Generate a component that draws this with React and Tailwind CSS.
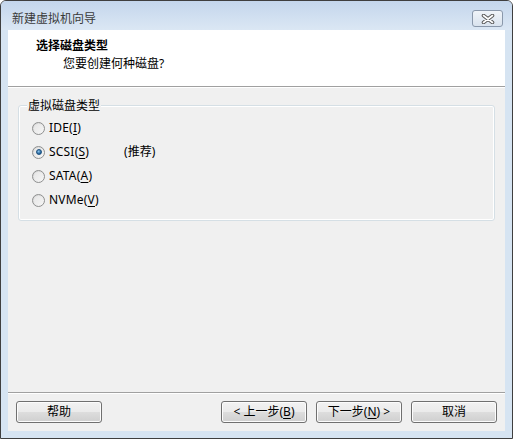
import React from "react";

const F = { fontFamily: '"Noto Sans", "Noto Sans CJK SC", sans-serif' };

function Radio({ checked }) {
  return (
    <div className="w-[13px] h-[13px] rounded-full border border-[#8e8f8f] bg-gradient-to-br from-[#d4d4d4] to-[#fbfbfb] flex items-center justify-center shrink-0">
      <div className="w-[9px] h-[9px] rounded-full bg-gradient-to-br from-[#e6e6e6] to-[#f4f4f4] flex items-center justify-center">
        {checked && (
          <div className="w-[6px] h-[6px] rounded-full bg-[radial-gradient(circle_at_40%_35%,#8cc6f0,#1f5f96_70%)] border border-[#1b4f7e]" />
        )}
      </div>
    </div>
  );
}

function RadioRow({ checked, label, ul, extra }) {
  const [a] = label;
  return (
    <div className="flex items-center h-[24px]">
      <Radio checked={checked} />
      <span className="ml-[4px] text-[12px] text-black leading-none tracking-[0.2px]">
        {a}(<span className="underline underline-offset-[2px]">{ul}</span>)
      </span>
      {extra && <span className="ml-[35px] text-[12px] text-black leading-none">{extra}</span>}
    </div>
  );
}

function Btn({ children }) {
  return (
    <div className="w-[86px] h-[22px] rounded-[3px] border border-[#707070] bg-[linear-gradient(#f2f2f2_0%,#ebebeb_48%,#dddddd_52%,#cfcfcf_100%)] flex items-center justify-center text-[12px] text-black leading-none shadow-[inset_0_0_0_1px_#fcfcfc]">
      {children}
    </div>
  );
}

export default function App() {
  return (
    <div style={F} className="w-[513px] h-[439px] border border-[#3f3f3f] rounded-t-[6px] bg-[#d6e4f2] flex flex-col px-[7px] pb-[7px] overflow-hidden">
      <div className="h-[29px] -mx-[7px] px-[7px] bg-[linear-gradient(#c4d6ec,#dbe7f4)] flex items-start justify-between">
        <span className="ml-[4px] mt-[11px] text-[12px] text-[#3a3a3a] leading-[14px]">新建虚拟机向导</span>
        <div className="w-[31px] h-[17px] mt-[9px] mr-[2px] rounded-[3px] border border-[#8a98ab] bg-[linear-gradient(#f0f4f9,#d9e3ee)] flex items-center justify-center">
          <svg width="14" height="10" viewBox="0 0 14 10">
            <path d="M2.5 1.5 L11.5 8.5 M11.5 1.5 L2.5 8.5" stroke="#5a5a5a" strokeWidth="3.6" strokeLinecap="round" />
            <path d="M2.5 1.5 L11.5 8.5 M11.5 1.5 L2.5 8.5" stroke="#ffffff" strokeWidth="1.6" strokeLinecap="round" />
          </svg>
        </div>
      </div>
      <div className="flex-1 bg-[#f0f0f0] flex flex-col">
        <div className="h-[56px] bg-white flex flex-col">
          <div className="pl-[28px] pt-[9px] text-[12px] font-bold text-black leading-[14px]">选择磁盘类型</div>
          <div className="pl-[55px] pt-[4px] text-[12px] text-black leading-[14px]">您要创建何种磁盘?</div>
        </div>
        <div className="h-px bg-[#a0a0a0]" />
        <div className="h-px bg-white" />
        <div className="flex-1 flex flex-col">
          <div className="mx-[10px] mt-[17px] h-[116px] relative rounded-[3px] border border-[#d5dfe5] shadow-[inset_0_0_0_1px_#ffffff] pt-[10px] pl-[13px]">
            <span className="absolute left-[8px] -top-[7px] px-[1px] bg-[#f0f0f0] text-[12px] text-black leading-[14px]">虚拟磁盘类型</span>
            <RadioRow label={["IDE"]} ul="I" />
            <RadioRow checked label={["SCSI"]} ul="S" extra="(推荐)" />
            <RadioRow label={["SATA"]} ul="A" />
            <RadioRow label={["NVMe"]} ul="V" />
          </div>
        </div>
        <div className="h-px bg-[#a0a0a0]" />
        <div className="h-px bg-white" />
        <div className="h-[37px] flex items-center px-[8px] pb-[1px]">
          <Btn>帮助</Btn>
          <div className="flex-1" />
          <div className="flex gap-[9px]">
            <Btn>&lt; 上一步(<span className="underline underline-offset-[2px]">B</span>)</Btn>
            <Btn>下一步(<span className="underline underline-offset-[2px]">N</span>) &gt;</Btn>
            <Btn>取消</Btn>
          </div>
        </div>
      </div>
    </div>
  );
}
